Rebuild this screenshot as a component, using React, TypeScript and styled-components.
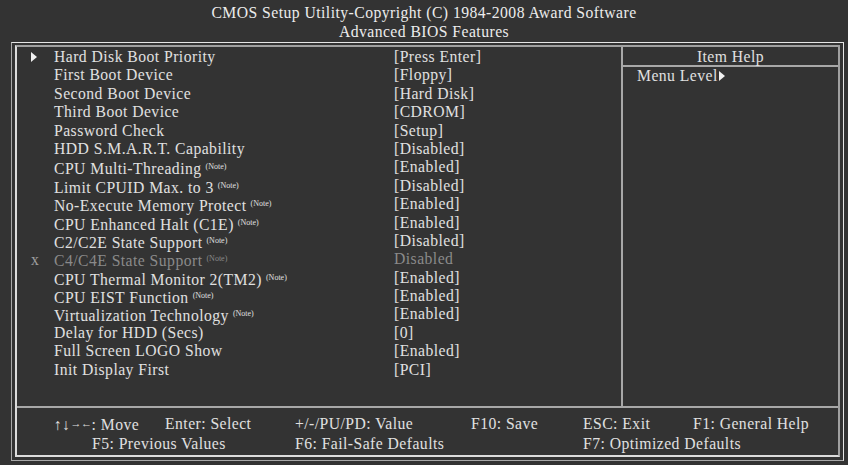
import React from "react";
import styled, { createGlobalStyle } from "styled-components";

interface IRow {
  label: string;
  value: string;
  note?: boolean;
  marker?: "arrow" | "x";
  disabled?: boolean;
}

const rows: IRow[] = [
  { label: "Hard Disk Boot Priority", value: "[Press Enter]", marker: "arrow" },
  { label: "First Boot Device", value: "[Floppy]" },
  { label: "Second Boot Device", value: "[Hard Disk]" },
  { label: "Third Boot Device", value: "[CDROM]" },
  { label: "Password Check", value: "[Setup]" },
  { label: "HDD S.M.A.R.T. Capability", value: "[Disabled]" },
  { label: "CPU Multi-Threading", value: "[Enabled]", note: true },
  { label: "Limit CPUID Max. to 3", value: "[Disabled]", note: true },
  { label: "No-Execute Memory Protect", value: "[Enabled]", note: true },
  { label: "CPU Enhanced Halt (C1E)", value: "[Enabled]", note: true },
  { label: "C2/C2E State Support", value: "[Disabled]", note: true },
  { label: "C4/C4E State Support", value: "Disabled", note: true, marker: "x", disabled: true },
  { label: "CPU Thermal Monitor 2(TM2)", value: "[Enabled]", note: true },
  { label: "CPU EIST Function", value: "[Enabled]", note: true },
  { label: "Virtualization Technology", value: "[Enabled]", note: true },
  { label: "Delay for HDD (Secs)", value: "[0]" },
  { label: "Full Screen LOGO Show", value: "[Enabled]" },
  { label: "Init Display First", value: "[PCI]" },
];

const Triangle = () => (
  <svg width="6" height="10" viewBox="0 0 6 10">
    <polygon points="0,0 6,5 0,10" fill="#f0f0f0" />
  </svg>
);

export default function App() {
  return (
    <>
      <GlobalStyle />
      <Screen>
        <Header>
          <HeaderLine>CMOS Setup Utility-Copyright (C) 1984-2008 Award Software</HeaderLine>
          <HeaderLine>Advanced BIOS Features</HeaderLine>
        </Header>
        <OuterFrame>
          <InnerFrame>
            <Body>
              <List>
                {rows.map((r) => (
                  <Row key={r.label} disabled={r.disabled}>
                    <Marker>
                      {r.marker === "arrow" && <Triangle />}
                      {r.marker === "x" && "x"}
                    </Marker>
                    <Label>
                      {r.label}
                      {r.note && <Note>(Note)</Note>}
                    </Label>
                    <Value>{r.value}</Value>
                  </Row>
                ))}
              </List>
              <HelpPanel>
                <HelpTitle>Item Help</HelpTitle>
                <HelpText>
                  Menu Level
                  <Triangle />
                </HelpText>
              </HelpPanel>
            </Body>
            <Footer>
              <Key>
                ↑↓<SideArrows>→←</SideArrows>: Move
              </Key>
              <Key>Enter: Select</Key>
              <Key>+/-/PU/PD: Value</Key>
              <Key>F10: Save</Key>
              <Key>ESC: Exit</Key>
              <Key>F1: General Help</Key>
              <Key span={2} indent={38}>F5: Previous Values</Key>
              <Key span={2}>F6: Fail-Safe Defaults</Key>
              <Key span={2}>F7: Optimized Defaults</Key>
            </Footer>
          </InnerFrame>
        </OuterFrame>
      </Screen>
    </>
  );
}

const GlobalStyle = createGlobalStyle`
  html, body {
    margin: 0;
    padding: 0;
    background: #333333;
  }
  body {
    font-family: "Liberation Serif", "Times New Roman", serif;
    font-size: 15.7px;
    letter-spacing: 0.45px;
    color: #e0e0e0;
  }
`;

const Screen = styled.div`
  width: 848px;
  height: 465px;
  background: #333333;
  overflow: hidden;
`;

const Header = styled.div`
  height: 42px;
  padding-top: 3px;
  box-sizing: border-box;
  text-align: center;
`;

const HeaderLine = styled.div`
  line-height: 19px;
  color: #ececec;
`;

const OuterFrame = styled.div`
  margin-left: 11px;
  width: 833px;
  box-sizing: border-box;
  border: 1px solid;
  border-color: #e6e6e6 #e6e6e6 #a8a8a8 #a8a8a8;
  padding: 2px 3px 3px 3px;
`;

const InnerFrame = styled.div`
  border: 2px solid;
  border-color: #a0a0a0 #a0a0a0 #dcdcdc #dcdcdc;
`;

const Body = styled.div`
  display: grid;
  grid-template-columns: 604px 1fr;
  height: 359px;
  border-bottom: 2px solid #a8a8a8;
`;

const List = styled.div`
  padding-top: 1px;
`;

const Row = styled.div<{ disabled?: boolean }>`
  display: grid;
  grid-template-columns: 37px 340px 1fr;
  height: 18.4px;
  line-height: 18.4px;
  white-space: nowrap;
  color: ${(p) => (p.disabled ? "#8a8a8a" : "#e0e0e0")};
`;

const Marker = styled.div`
  padding-left: 14px;
  display: flex;
  align-items: center;
  color: #a0a0a0;
`;

const Label = styled.div``;

const Note = styled.span`
  font-size: 8px;
  letter-spacing: 0;
  margin-left: 4px;
  vertical-align: 5px;
`;

const Value = styled.div``;

const HelpPanel = styled.div`
  border-left: 2px solid #a8a8a8;
`;

const HelpTitle = styled.div`
  text-align: center;
  padding-top: 1px;
  line-height: 17px;
  border-bottom: 2px solid #a8a8a8;
`;

const HelpText = styled.div`
  padding-left: 14px;
  line-height: 18.4px;
  display: flex;
  align-items: center;
  gap: 1px;
`;

const Footer = styled.div`
  display: grid;
  grid-template-columns: 111px 130px 176px 112px 110px 1fr;
  padding: 6px 0 3px 37px;
  height: 47px;
  box-sizing: border-box;
`;

const Key = styled.div<{ span?: number; indent?: number }>`
  line-height: 19px;
  white-space: nowrap;
  grid-column: span ${(p) => p.span ?? 1};
  padding-left: ${(p) => p.indent ?? 0}px;
`;

const SideArrows = styled.span`
  font-size: 11px;
  letter-spacing: -0.5px;
  vertical-align: 3px;
`;
